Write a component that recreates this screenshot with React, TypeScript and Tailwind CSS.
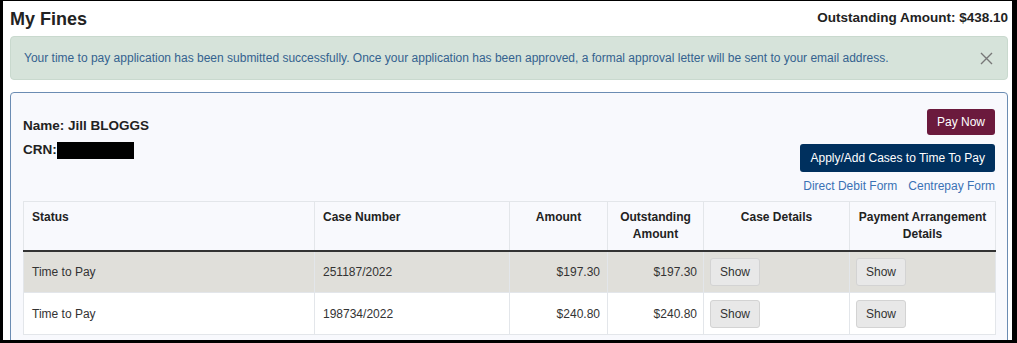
import React from "react";

const rows = [
  { status: "Time to Pay", cn: "251187/2022", amt: "$197.30", out: "$197.30", bg: "bg-[#e0dfda]" },
  { status: "Time to Pay", cn: "198734/2022", amt: "$240.80", out: "$240.80", bg: "bg-white" },
];

function ShowBtn() {
  return (
    <button className="h-[28px] w-[50px] rounded-[3px] border border-[#d3d3d3] bg-[#e8e8e8] text-[12px] text-[#333]">
      Show
    </button>
  );
}

export default function App() {
  return (
    <div
      className="w-[1017px] h-[343px] overflow-hidden bg-black pl-[3px] pt-[1px] pr-[5px] pb-[3px]"
      style={{ fontFamily: '"Liberation Sans", Arial, sans-serif' }}
    >
      <div className="h-full overflow-hidden bg-white pl-[7px] pr-[4px]">
        <div className="flex h-[35px] items-center justify-between">
          <h1 className="pt-[2px] text-[18px] font-bold text-[#222]">My Fines</h1>
          <div className="text-[13.5px] font-bold text-[#222]">Outstanding Amount: $438.10</div>
        </div>
        <div className="flex h-[44px] items-center justify-between rounded-[4px] border border-[#c9d9ce] bg-[#d6e3da] pl-[13px] pr-[14px]">
          <span className="text-[12px] text-[#34628f]">
            Your time to pay application has been submitted successfully. Once your application has been approved, a formal approval letter will be sent to your email address.
          </span>
          <svg width="13" height="13" viewBox="0 0 13 13" className="text-[#777]">
            <path d="M1 1L12 12M12 1L1 12" stroke="currentColor" strokeWidth="1.4" />
          </svg>
        </div>
        <div className="mt-[12px] h-[300px] rounded-t-[4px] border border-[#6b8cb3] bg-[#f8f9fd] px-[12px] pt-[16px]">
          <div className="flex justify-between">
            <div className="pt-[7px] text-[13.5px] font-bold text-[#222]">
              <div className="leading-[20px]">Name: Jill BLOGGS</div>
              <div className="mt-[4px] flex items-center leading-[20px]">
                <span>CRN:</span>
                <span className="inline-block h-[17px] w-[77px] bg-black" />
              </div>
            </div>
            <div className="flex flex-col items-end">
              <button className="h-[26px] rounded-[3px] bg-[#6b1a3d] px-[10px] text-[12px] text-white">Pay Now</button>
              <button className="mt-[9px] h-[28px] rounded-[3px] bg-[#00305e] px-[10px] text-[12px] text-white">
                Apply/Add Cases to Time To Pay
              </button>
              <div className="mt-[6px] flex h-[16px] items-center gap-[11px] text-[12px] text-[#3a72b5]">
                <span>Direct Debit Form</span>
                <span>Centrepay Form</span>
              </div>
            </div>
          </div>
          <table className="mt-[7px] w-full table-fixed border-collapse border border-[#e3e6ea] text-[12px] text-[#333]">
            <colgroup>
              <col className="w-[291px]" />
              <col className="w-[195px]" />
              <col className="w-[98px]" />
              <col className="w-[96px]" />
              <col className="w-[146px]" />
              <col className="w-[146px]" />
            </colgroup>
            <thead>
              <tr className="h-[49px] border-b-2 border-[#333] align-top font-bold text-[#222] leading-[17px]">
                <th className="border-r border-[#e3e6ea] px-[8px] pt-[7px] text-left">Status</th>
                <th className="border-r border-[#e3e6ea] px-[8px] pt-[7px] text-left">Case Number</th>
                <th className="border-r border-[#e3e6ea] px-[6px] pt-[7px] text-center">Amount</th>
                <th className="border-r border-[#e3e6ea] px-[6px] pt-[7px] text-center">Outstanding Amount</th>
                <th className="border-r border-[#e3e6ea] px-[6px] pt-[7px] text-center">Case Details</th>
                <th className="px-[6px] pt-[7px] text-center">Payment Arrangement Details</th>
              </tr>
            </thead>
            <tbody>
              {rows.map((r, i) => (
                <tr key={i} className={`h-[42px] border-b border-[#e3e6ea] ${r.bg}`}>
                  <td className="border-r border-[#e3e6ea] px-[8px]">{r.status}</td>
                  <td className="border-r border-[#e3e6ea] px-[8px]">{r.cn}</td>
                  <td className="border-r border-[#e3e6ea] px-[7px] text-right">{r.amt}</td>
                  <td className="border-r border-[#e3e6ea] px-[6px] text-right">{r.out}</td>
                  <td className="border-r border-[#e3e6ea] px-[6px]">
                    <ShowBtn />
                  </td>
                  <td className="px-[6px]">
                    <ShowBtn />
                  </td>
                </tr>
              ))}
            </tbody>
          </table>
        </div>
      </div>
    </div>
  );
}
